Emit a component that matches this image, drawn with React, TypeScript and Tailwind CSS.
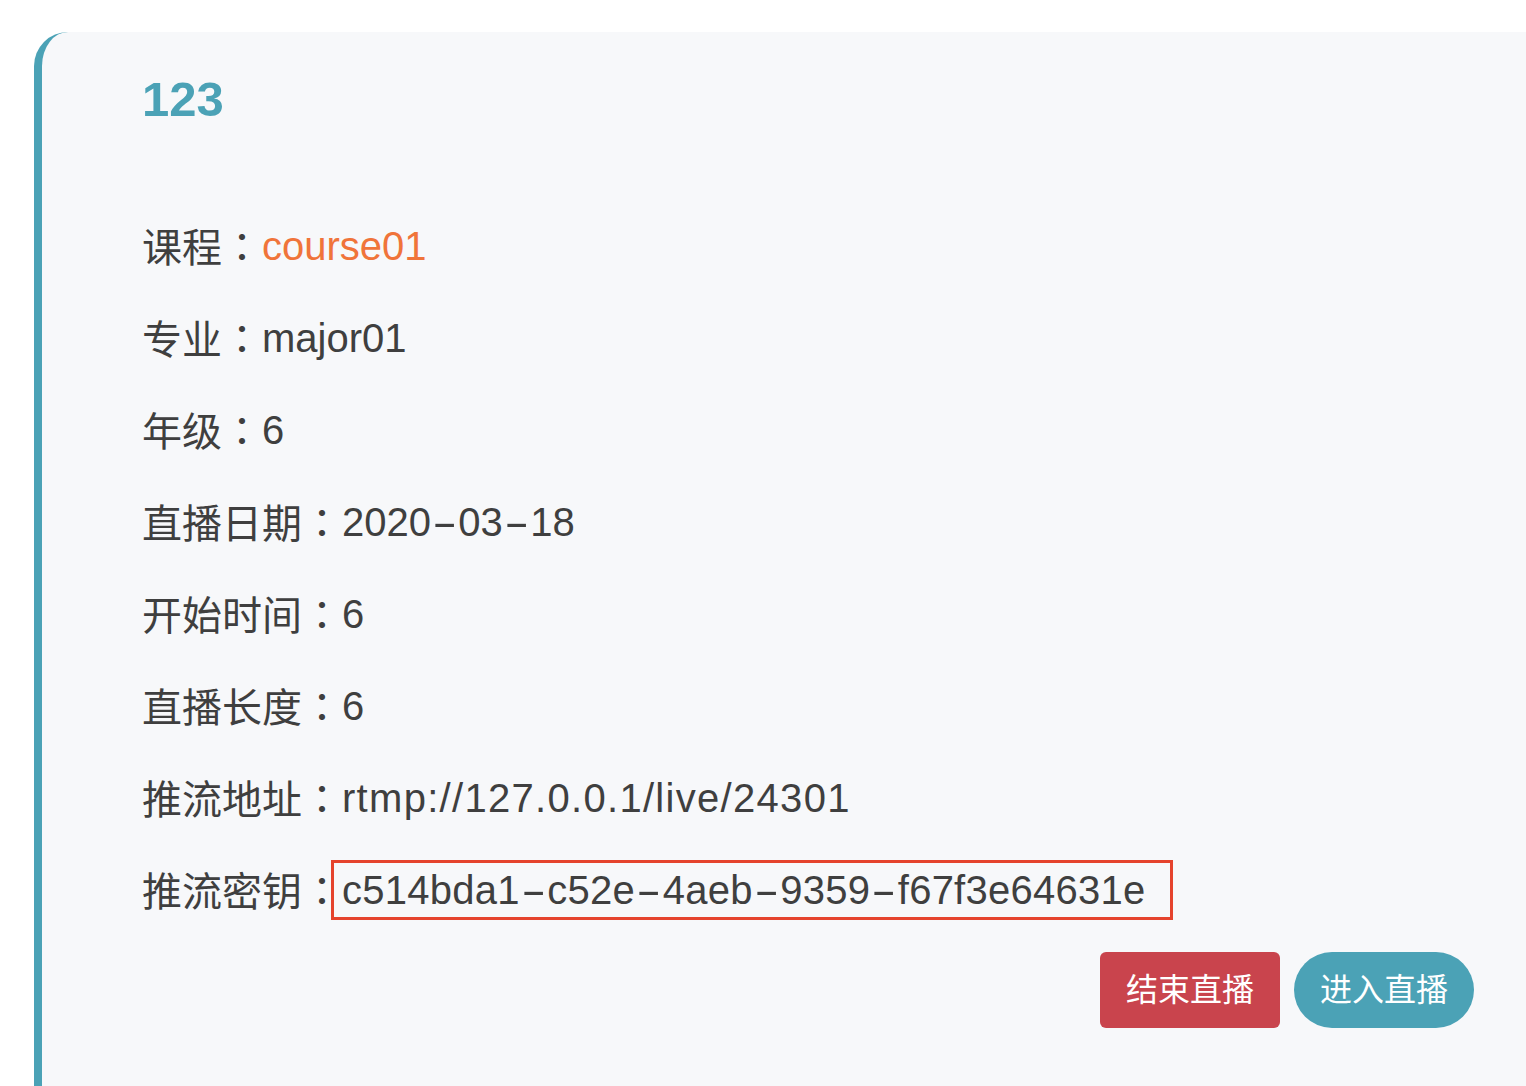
const font = { fontFamily: '"Liberation Sans", "Noto Sans CJK SC", sans-serif' }
const colonFont = { fontFamily: '"Noto Sans CJK TC", sans-serif' }

const rows: { label: string; value: string; accent?: boolean; wide?: boolean }[] = [
  { label: "课程", value: "course01", accent: true },
  { label: "专业", value: "major01" },
  { label: "年级", value: "6" },
  { label: "直播日期", value: "2020-03-18" },
  { label: "开始时间", value: "6" },
  { label: "直播长度", value: "6" },
  { label: "推流地址", value: "rtmp://127.0.0.1/live/24301", wide: true },
]

const streamKey = "c514bda1-c52e-4aeb-9359-f67f3e64631e"

// the dashes in the picture are long and thin, wider than a plain hyphen
function Dashed({ text }: { text: string }) {
  const parts = text.split("-")
  return (
    <>
      {parts.map((p, i) => (
        <span key={i}>
          {i > 0 && <span className="inline-block px-[7px] scale-x-[1.9]">-</span>}
          {p}
        </span>
      ))}
    </>
  )
}

function Label({ text }: { text: string }) {
  return (
    <span>
      {text}
      <span style={colonFont}>：</span>
    </span>
  )
}

export default function App() {
  return (
    <div className="w-[1526px] h-[1086px] overflow-hidden bg-white" style={font}>
      <div className="ml-[34px] mt-[32px] w-[1492px] min-h-[1100px] bg-[#f7f8fa] border-l-[8px] border-[#4ba2b6] rounded-tl-[34px] pl-[100px] pr-[52px] pt-[37px] pb-[60px]">
        {/* Title */}
        <h2 className="text-[49px] leading-[60px] font-bold text-[#4ba2b6]">123</h2>

        {/* Info rows */}
        <div className="mt-[71px] text-[40px] text-[#3f3f3f]">
          {rows.map((r) => (
            <div key={r.label} className="h-[92px] flex items-center whitespace-nowrap">
              <Label text={r.label} />
              <span className={(r.accent ? "text-[#f0743a]" : "") + (r.wide ? " tracking-[1.3px]" : "")}>
                <Dashed text={r.value} />
              </span>
            </div>
          ))}
          <div className="h-[92px] flex items-center whitespace-nowrap">
            <Label text="推流密钥" />
            <span className="-ml-[11px] w-[842px] h-[60px] border-[3px] border-[#e5432d] pl-[8px] flex items-center tracking-[0.25px]">
              <Dashed text={streamKey} />
            </span>
          </div>
        </div>

        {/* Actions */}
        <div className="mt-[16px] flex justify-end gap-[14px]">
          <button className="w-[180px] h-[76px] rounded-[6px] bg-[#c9444d] text-white text-[32px]">结束直播</button>
          <button className="w-[180px] h-[76px] rounded-full bg-[#4ba2b6] text-white text-[32px]">进入直播</button>
        </div>
      </div>
    </div>
  )
}
